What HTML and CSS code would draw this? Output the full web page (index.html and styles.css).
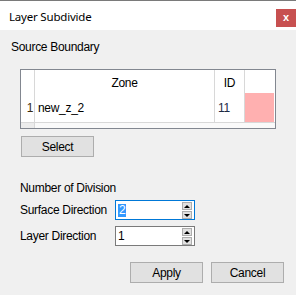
FILE: index.html
```html
<!DOCTYPE html>
<html lang="en">
<head>
  <meta charset="UTF-8" />
  <title>Layer Subdivide</title>
  <link rel="stylesheet" href="styles.css">
</head>
<body>
  <div class="window">
    <div class="titlebar">
      <span class="title">Layer Subdivide</span>
      <span class="close-btn">x</span>
    </div>
    <div class="content">
      <div class="group-label">Source Boundary</div>
      <div class="grid-box">
        <div class="grid-row head">
          <div class="cell rownum"></div>
          <div class="cell zone">Zone</div>
          <div class="cell id">ID</div>
          <div class="cell color"></div>
        </div>
        <div class="grid-row data">
          <div class="cell rownum">1</div>
          <div class="cell zone">new_z_2</div>
          <div class="cell id">11</div>
          <div class="cell color pink"></div>
        </div>
        <div class="grid-row filler">
          <div class="cell rownum"></div>
          <div class="cell rest"></div>
        </div>
      </div>
      <button class="btn select-btn">Select</button>

      <div class="division-label">Number of Division</div>
      <div class="field">
        <span class="field-label">Surface Direction</span>
        <div class="spinbox focused">
          <span class="value"><span class="sel">2</span></span>
          <div class="spin">
            <span class="arrow up"></span>
            <span class="arrow down"></span>
          </div>
        </div>
      </div>
      <div class="field">
        <span class="field-label">Layer Direction</span>
        <div class="spinbox">
          <span class="value">1</span>
          <div class="spin">
            <span class="arrow up"></span>
            <span class="arrow down"></span>
          </div>
        </div>
      </div>

      <div class="actions">
        <button class="btn">Apply</button>
        <button class="btn">Cancel</button>
      </div>
    </div>
  </div>
</body>
</html>
```

FILE: styles.css
```css
body {
  margin: 0;
  background-color: #f0f0f0;
  font-family: 'Liberation Sans', Arial, sans-serif;
  font-size: 12px;
  letter-spacing: -0.3px;
  color: #000;
}
.window {
  width: 296px;
  height: 295px;
  border-top: 1px solid #7a7a7a;
  box-sizing: border-box;
  overflow: hidden;
}
.titlebar {
  height: 29px;
  background-color: #fff;
  display: flex;
  justify-content: space-between;
  align-items: flex-start;
}
.title {
  font-family: 'Noto Sans', sans-serif;
  font-size: 11.5px;
  letter-spacing: -0.2px;
  line-height: 16px;
  padding: 8px 0 0 9px;
  color: #000;
}
.close-btn {
  width: 20px;
  height: 18px;
  margin-top: 8px;
  background-color: #c75050;
  color: #fff;
  font-weight: bold;
  font-size: 11px;
  line-height: 17px;
  text-align: center;
}
.group-label {
  line-height: 16px;
  margin: 9px 0 0 11px;
}
.grid-box {
  width: 256px;
  height: 60px;
  margin: 14px 0 0 20px;
  border: 1px solid #828790;
  box-sizing: border-box;
  background-color: #fff;
  display: flex;
  flex-direction: column;
}
.grid-row {
  display: grid;
  grid-template-columns: 14px 180px 30px 30px;
}
.grid-row.head {
  height: 23px;
}
.grid-row.data {
  height: 29px;
  border-bottom: 1px solid #d8d8d8;
}
.grid-row.filler {
  flex: 1;
  grid-template-columns: 14px 240px;
}
.cell {
  box-sizing: border-box;
  border-right: 1px solid #d8d8d8;
  display: flex;
  align-items: center;
  line-height: 14px;
}
.head .zone, .head .id {
  justify-content: center;
  padding-top: 2px;
}
.data .rownum {
  justify-content: flex-end;
  padding-right: 1px;
  color: #3a2a10;
}
.data .zone {
  padding-left: 3px;
}
.data .id {
  padding-left: 3px;
  color: #1b2a44;
}
.cell.color {
  border-right: none;
  margin-right: 1px;
}
.cell.pink {
  background-color: #ffb0b0;
}
.filler .rownum {
  background-color: #ececec;
}
.filler .rest {
  border-right: none;
  background-color: #fafafa;
}
.btn {
  width: 73px;
  height: 21px;
  padding: 0;
  background-color: #e1e1e1;
  border: 1px solid #adadad;
  font-family: inherit;
  font-size: 12px;
  letter-spacing: -0.3px;
  color: #000;
}
.select-btn {
  display: block;
  margin: 7px 0 0 21px;
}
.division-label {
  line-height: 16px;
  margin: 23px 0 0 20px;
}
.field {
  display: flex;
  align-items: center;
  height: 20px;
  margin: 4px 0 0 20px;
}
.field + .field {
  margin-top: 6px;
}
.field-label {
  width: 95px;
}
.spinbox {
  width: 80px;
  height: 20px;
  box-sizing: border-box;
  border: 1px solid #7a7a7a;
  background-color: #fff;
  display: flex;
}
.spinbox.focused {
  border-color: #0078d7;
}
.value {
  flex: 1;
  padding-left: 2px;
  display: flex;
  align-items: center;
  line-height: 13px;
}
.sel {
  background-color: #3399ff;
  color: #fff;
  padding: 0 1px;
}
.spin {
  width: 10px;
  margin: 1px 2px 0 0;
  display: flex;
  flex-direction: column;
  gap: 1px;
}
.arrow {
  height: 8px;
  box-sizing: border-box;
  border: 1px solid #adadad;
  background-color: #e1e1e1;
  position: relative;
}
.arrow::after {
  content: "";
  position: absolute;
  left: 1px;
  top: 2px;
  border-left: 3px solid transparent;
  border-right: 3px solid transparent;
}
.arrow.up::after {
  border-bottom: 3px solid #000;
}
.arrow.down::after {
  top: 2px;
  border-top: 3px solid #000;
}
.actions {
  display: flex;
  justify-content: flex-end;
  gap: 8px;
  margin: 16px 12px 0 0;
}
```
